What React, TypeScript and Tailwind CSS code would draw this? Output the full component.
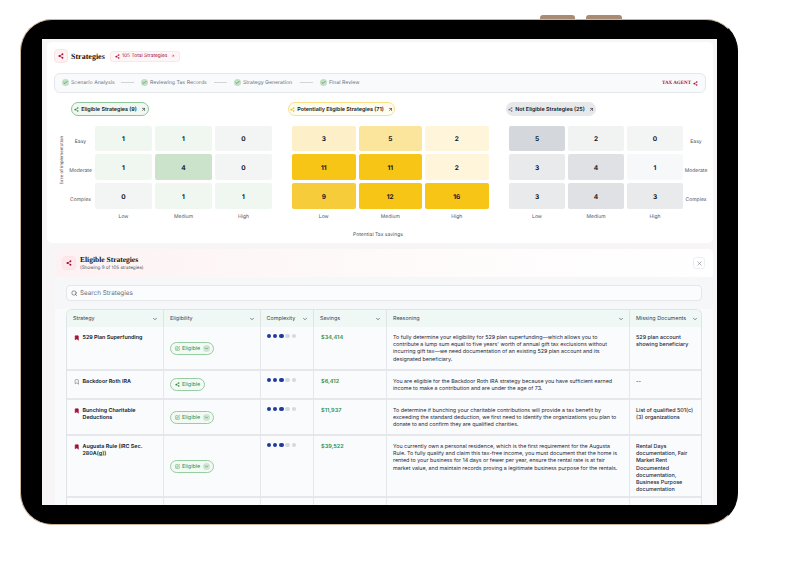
import { ArrowUpRight, Bookmark, Check, ChevronDown, Search, SquarePen, X } from "lucide-react";

const Nodes = ({ className }: { className?: string }) => (
  <svg viewBox="0 0 12 12" className={className} fill="currentColor" stroke="currentColor">
    <path d="M3 6 9 2.5M3 6l6 3.5" strokeWidth="1.4" fill="none" />
    <circle cx="3" cy="6" r="2.1" stroke="none" />
    <circle cx="9" cy="2.5" r="1.8" stroke="none" />
    <circle cx="9" cy="9.5" r="1.8" stroke="none" />
  </svg>
);

const steps = [
  { label: "Scenario Analysis", width: "w-[43px]" },
  { label: "Reviewing Tax Records", width: "w-[57px]" },
  { label: "Strategy Generation", width: "w-[50px]" },
  { label: "Final Review", width: "w-[31px]" },
];

const rowLabels = ["Easy", "Moderate", "Complex"];
const colLabels = ["Low", "Medium", "High"];

const green = [
  { n: 1, c: "bg-[#f0f7f0]" }, { n: 1, c: "bg-[#f0f7f0]" }, { n: 0, c: "bg-[#f3f4f4]" },
  { n: 1, c: "bg-[#f0f7f0]" }, { n: 4, c: "bg-[#cce3cb]" }, { n: 0, c: "bg-[#f3f4f4]" },
  { n: 0, c: "bg-[#f3f4f4]" }, { n: 1, c: "bg-[#f0f7f0]" }, { n: 1, c: "bg-[#f0f7f0]" },
];
const yellow = [
  { n: 3, c: "bg-[#fdf0c8]" }, { n: 5, c: "bg-[#fbe49c]" }, { n: 2, c: "bg-[#fef5da]" },
  { n: 11, c: "bg-[#f6c515]" }, { n: 11, c: "bg-[#f6c515]" }, { n: 2, c: "bg-[#fef5da]" },
  { n: 9, c: "bg-[#f7cc3a]" }, { n: 12, c: "bg-[#f6c515]" }, { n: 16, c: "bg-[#f6c515]" },
];
const gray = [
  { n: 5, c: "bg-[#d4d7db]" }, { n: 2, c: "bg-[#f1f2f2]" }, { n: 0, c: "bg-[#f3f4f4]" },
  { n: 3, c: "bg-[#e9eaec]" }, { n: 4, c: "bg-[#dfe1e4]" }, { n: 1, c: "bg-[#f7f8f9]" },
  { n: 3, c: "bg-[#e9eaec]" }, { n: 4, c: "bg-[#dfe1e4]" }, { n: 3, c: "bg-[#e9eaec]" },
];

const Heat = ({ cells, cols, gap }: { cells: { n: number; c: string }[]; cols: string; gap: string }) => (
  <div className={gap}>
    <div className={`grid ${cols} grid-rows-[25px_26px_26px] gap-[3px]`}>
      {cells.map((cell, i) => (
        <div
          key={i}
          className={`flex items-center justify-center rounded-[2px] pt-[3px] text-[6.5px] font-bold text-[#111827] ${cell.c}`}
        >
          {cell.n}
        </div>
      ))}
    </div>
    <div className={`mt-[5px] grid ${cols} gap-[3px] text-center text-[5px] leading-[7px] text-[#4b5563]`}>
      {colLabels.map((l) => (
        <span key={l}>{l}</span>
      ))}
    </div>
  </div>
);

const RowLabels = ({ className }: { className: string }) => (
  <div className={`grid grid-rows-[25px_26px_26px] gap-[3px] text-center text-[5px] text-[#4b5563] ${className}`}>
    {rowLabels.map((l) => (
      <span key={l} className="flex items-center justify-center pt-[9px]">
        {l}
      </span>
    ))}
  </div>
);

const rows = [
  {
    name: "529 Plan Superfunding",
    saved: true,
    edited: true,
    savings: "$34,414",
    height: "h-[44px]",
    reasoning:
      "To fully determine your eligibility for 529 plan superfunding—which allows you to contribute a lump sum equal to five years' worth of annual gift tax exclusions without incurring gift tax—we need documentation of an existing 529 plan account and its designated beneficiary.",
    docs: "529 plan account showing beneficiary",
  },
  {
    name: "Backdoor Roth IRA",
    saved: false,
    edited: false,
    savings: "$6,412",
    height: "h-[29px]",
    reasoning:
      "You are eligible for the Backdoor Roth IRA strategy because you have sufficient earned income to make a contribution and are under the age of 73.",
    docs: "--",
  },
  {
    name: "Bunching Charitable Deductions",
    saved: true,
    edited: true,
    savings: "$11,937",
    height: "h-[36px]",
    reasoning:
      "To determine if bunching your charitable contributions will provide a tax benefit by exceeding the standard deduction, we first need to identify the organizations you plan to donate to and confirm they are qualified charities.",
    docs: "List of qualified 501(c)\u200b(3) organizations",
  },
  {
    name: "Augusta Rule (IRC Sec. 280A(g))",
    saved: true,
    edited: true,
    savings: "$39,522",
    height: "h-[62px]",
    reasoning:
      "You currently own a personal residence, which is the first requirement for the Augusta Rule. To fully qualify and claim this tax-free income, you must document that the home is rented to your business for 14 days or fewer per year, ensure the rental rate is at fair market value, and maintain records proving a legitimate business purpose for the rentals.",
    docs: "Rental Days documentation, Fair Market Rent Documented documentation, Business Purpose documentation",
  },
  { name: "", saved: false, edited: false, savings: "", height: "h-[20px]", reasoning: "", docs: "", empty: true },
];

const tableCols = "grid-cols-[97px_96.5px_53.5px_73px_243px_73px]";
const headers = ["Strategy", "Eligibility", "Complexity", "Savings", "Reasoning", "Missing Documents"];

const Dots = () => (
  <div className="flex gap-[1.8px]">
    {[0, 1, 2, 3, 4].map((i) => (
      <span key={i} className={`h-[4.5px] w-[4.5px] rounded-full ${i < 3 ? "bg-[#1e3a9a]" : "bg-[#d5d9e0]"}`} />
    ))}
  </div>
);

const App = () => {
  return (
    <div className="relative h-[565px] w-[800px] overflow-hidden bg-white pl-[20px] pt-[19px] font-['Inter',sans-serif] [text-rendering:geometricPrecision]">
      {/* top hardware buttons */}
      <span className="absolute left-[540px] top-[15px] h-[4px] w-[35px] rounded-t-[3px] bg-[#a98a72]" />
      <span className="absolute left-[586px] top-[15px] h-[4px] w-[36px] rounded-t-[3px] bg-[#a98a72]" />

      <div className="h-[506px] w-[718px] rounded-[32px] border-[1px] border-[#cdb59b] border-r-black bg-black pb-[20px] pl-[21px] pr-[20px] pt-[19px]">
        <div className="flex h-[466px] w-[675px] flex-col overflow-hidden bg-[#f8f5f6] pl-[5px] pt-[3px]">
          {/* Top card */}
          <div className="h-[201px] w-[666px] shrink-0 rounded-[5px] bg-white">
            <div className="flex items-center pl-[7px] pt-[7px]">
              <div className="flex h-[14px] w-[14px] items-center justify-center rounded-[4px] border border-[#fae3e6] bg-[#fdf1f2] text-[#a3123a]">
                <Nodes className="h-[6px] w-[6px]" />
              </div>
              <span className="ml-[3px] w-[32px] pt-[1px] font-['Liberation_Serif',serif] text-[8px] font-bold text-[#111111]">Strategies</span>
              <div className="ml-[7px] flex h-[11px] w-[70px] items-center rounded-[3px] border border-[#fbe6e8] bg-[#fef6f6] pl-[4px] text-[4.9px] text-[#a3123a]">
                <Nodes className="h-[5px] w-[5px]" />
                <span className="ml-[2px] pt-[2px]">105 Total Strategies</span>
                <ArrowUpRight className="ml-[4px] h-[4px] w-[4px]" strokeWidth={2} />
              </div>
            </div>

            {/* Stepper */}
            <div className="ml-[7px] mt-[10px] flex h-[20px] w-[652px] items-center rounded-[6px] border border-[#e4e7eb] bg-[#f9fafb] pl-[7px] pr-[7px]">
              {steps.map((s, i) => (
                <div key={s.label} className="flex items-center">
                  <span className="flex h-[7px] w-[7px] items-center justify-center rounded-full bg-[#c4dfc6] text-[#2f8a46]">
                    <Check className="h-[5px] w-[5px]" strokeWidth={3} />
                  </span>
                  <span className={`ml-[2px] pt-[2px] text-[5.2px] text-[#6b7280] whitespace-nowrap ${s.width}`}>{s.label}</span>
                  {i < 3 && <span className="mx-[7px] h-px w-[13px] bg-[#d1d5db]" />}
                </div>
              ))}
              <div className="ml-auto flex items-center text-[#a3123a]">
                <span className="pt-[1px] font-['Liberation_Serif',serif] text-[5px] font-bold">TAX AGENT</span>
                <Nodes className="ml-[2px] h-[5px] w-[5px]" />
              </div>
            </div>

            {/* Pills */}
            <div className="mt-[9px] flex pl-[24px] text-[5.4px] font-semibold text-[#111827]">
              <div className="flex h-[14px] w-[78px] items-center justify-center gap-[2px] rounded-full border border-[#8fc69c] bg-[#f1f8f2]">
                <Nodes className="h-[5px] w-[5px] text-[#2f8a46]" />
                <span className="pt-[2px]">Eligible Strategies (9)</span>
                <ArrowUpRight className="ml-[2px] h-[5px] w-[5px]" strokeWidth={2.5} />
              </div>
              <div className="ml-[139px] flex h-[14px] w-[107px] items-center justify-center gap-[2px] rounded-full border border-[#fbe08a] bg-[#fffcf0]">
                <Nodes className="h-[5px] w-[5px] text-[#f0bc12]" />
                <span className="pt-[2px]">Potentially Eligible Strategies (71)</span>
                <ArrowUpRight className="ml-[2px] h-[5px] w-[5px]" strokeWidth={2.5} />
              </div>
              <div className="ml-[111px] flex h-[14px] w-[90px] items-center justify-center gap-[2px] rounded-full bg-[#e7e8ea]">
                <Nodes className="h-[5px] w-[5px] text-[#6b7280]" />
                <span className="pt-[2px]">Not Eligible Strategies (25)</span>
                <ArrowUpRight className="ml-[2px] h-[5px] w-[5px]" strokeWidth={2.5} />
              </div>
            </div>

            {/* Matrices */}
            <div className="mt-[10px] flex pl-[13px]">
              <div className="relative flex w-[35px] shrink-0">
                <span className="flex h-[84px] w-[6px] items-center justify-center pb-[15px]">
                  <span className="whitespace-nowrap text-[4.4px] text-[#4b5563] [writing-mode:vertical-rl] rotate-180">Ease of implementation</span>
                </span>
                <RowLabels className="ml-[2px] w-[25px]" />
              </div>
              <Heat cells={green} cols="grid-cols-[57px_57px_57px]" gap="w-[177px] shrink-0" />
              <Heat cells={yellow} cols="grid-cols-[63.5px_63.5px_63.5px]" gap="ml-[20px] w-[197px] shrink-0" />
              <Heat cells={gray} cols="grid-cols-[56px_56px_56px]" gap="ml-[20px] w-[174px] shrink-0" />
              <RowLabels className="w-[26px] shrink-0" />
            </div>
            <div className="mt-[11px] pr-[4px] text-center text-[5px] text-[#4b5563]">Potential Tax savings</div>
          </div>

          {/* Eligible strategies panel */}
          <div className="ml-[8px] mt-[6px] flex w-[658px] grow flex-col overflow-hidden rounded-t-[5px] bg-[#f6f7f9]">
            <div className="flex h-[28px] shrink-0 items-center bg-gradient-to-r from-[#fdf2f3] via-[#fefafa] to-white pl-[7px] pr-[8px]">
              <div className="flex h-[14px] w-[14px] items-center justify-center rounded-[4px] border border-[#fae3e6] bg-[#fde9eb] text-[#a3123a]">
                <Nodes className="h-[6px] w-[6px]" />
              </div>
              <div className="ml-[4px]">
                <div className="font-['Liberation_Serif',serif] text-[7.5px] font-bold leading-[10px] text-[#111111]">Eligible Strategies</div>
                <div className="text-[4.6px] leading-[7px] text-[#4b5563]">(Showing 9 of 105 strategies)</div>
              </div>
              <div className="ml-auto flex h-[12px] w-[12px] items-center justify-center rounded-[3px] border border-[#eceef0] bg-white text-[#4b5563]">
                <X className="h-[7px] w-[7px]" strokeWidth={1.5} />
              </div>
            </div>

            <div className="mx-[11px] mt-[8px] flex h-[16px] w-[636px] shrink-0 items-center rounded-[4px] border border-[#e5e7eb] bg-[#fbfcfd] pl-[4px] text-[6.3px] text-[#6b7280]">
              <Search className="h-[6.5px] w-[6.5px] text-[#374151]" strokeWidth={2} />
              <span className="ml-[2.5px] pt-[2px]">Search Strategies</span>
            </div>

            <div className="mt-[8px] grow bg-[#f8fafc] pl-[11px]">
              <div className="w-[636px] overflow-hidden rounded-t-[6px] border-x border-t border-[#dfe5e6]">
                <div className={`grid ${tableCols} h-[17px] bg-[#f0f8f6]`}>
                  {headers.map((h, i) => (
                    <div
                      key={h}
                      className={`flex items-center justify-between pl-[6px] pr-[5px] text-[5.4px] text-[#374151] ${i < 5 ? "border-r-[1.5px] border-[#dfe3e6]" : ""}`}
                    >
                      <span className="whitespace-nowrap pt-[2px]">{h}</span>
                      <ChevronDown className="h-[6px] w-[6px] shrink-0" strokeWidth={2.5} />
                    </div>
                  ))}
                </div>
                {rows.map((r, i) => (
                  <div key={i} className={`grid ${tableCols} ${r.height} border-b-[2px] border-[#e5e7eb] bg-[#fafbfd]`}>
                    <div className="flex border-r-[1.5px] border-[#e5e7eb] pl-[7px] pr-[10px] pt-[8px]">
                      {!r.empty && (
                        <>
                          <Bookmark
                            className={`h-[5.5px] w-[5.5px] shrink-0 ${r.saved ? "fill-[#a3123a] text-[#a3123a]" : "text-[#6b7280]"}`}
                            strokeWidth={2.5}
                          />
                          <span className="ml-[3px] text-[5.4px] font-semibold leading-[7.2px] text-[#111827]">{r.name}</span>
                        </>
                      )}
                    </div>
                    <div className="flex items-center border-r-[1.5px] border-[#e5e7eb] pl-[6px]">
                      {!r.empty && (
                        <div className="flex h-[13px] items-center gap-[2px] rounded-full border border-[#96cda3] bg-[#f3faf4] pl-[4px] pr-[3px] text-[5.4px] text-[#2f8a46]">
                          {r.edited ? <SquarePen className="h-[5px] w-[5px]" strokeWidth={2} /> : <Nodes className="h-[5px] w-[5px]" />}
                          <span className={r.edited ? "pt-[2px]" : "pr-[1px] pt-[2px]"}>Eligible</span>
                          {r.edited && (
                            <span className="ml-[1px] flex h-[7px] w-[7px] items-center justify-center rounded-full bg-[#cfe5d3]">
                              <ChevronDown className="h-[5px] w-[5px]" strokeWidth={3} />
                            </span>
                          )}
                        </div>
                      )}
                    </div>
                    <div className="border-r-[1.5px] border-[#e5e7eb] pl-[6px] pt-[6.5px]">
                      <Dots />
                    </div>
                    <div className="border-r-[1.5px] border-[#e5e7eb] pl-[7px] pt-[8px] text-[5.6px] font-semibold leading-[7.2px] text-[#2f8f4e]">{r.savings}</div>
                    <div className="border-r-[1.5px] border-[#e5e7eb] pl-[6px] pr-[8px] pt-[8px] text-[5.35px] leading-[7.2px] text-[#1f2937]">{r.reasoning}</div>
                    <div className="pl-[6px] pr-[8px] pt-[8px] text-[5.4px] font-medium leading-[7.2px] text-[#1f2937]">{r.docs}</div>
                  </div>
                ))}
              </div>
            </div>
          </div>
        </div>
      </div>
    </div>
  );
};

export default App;
